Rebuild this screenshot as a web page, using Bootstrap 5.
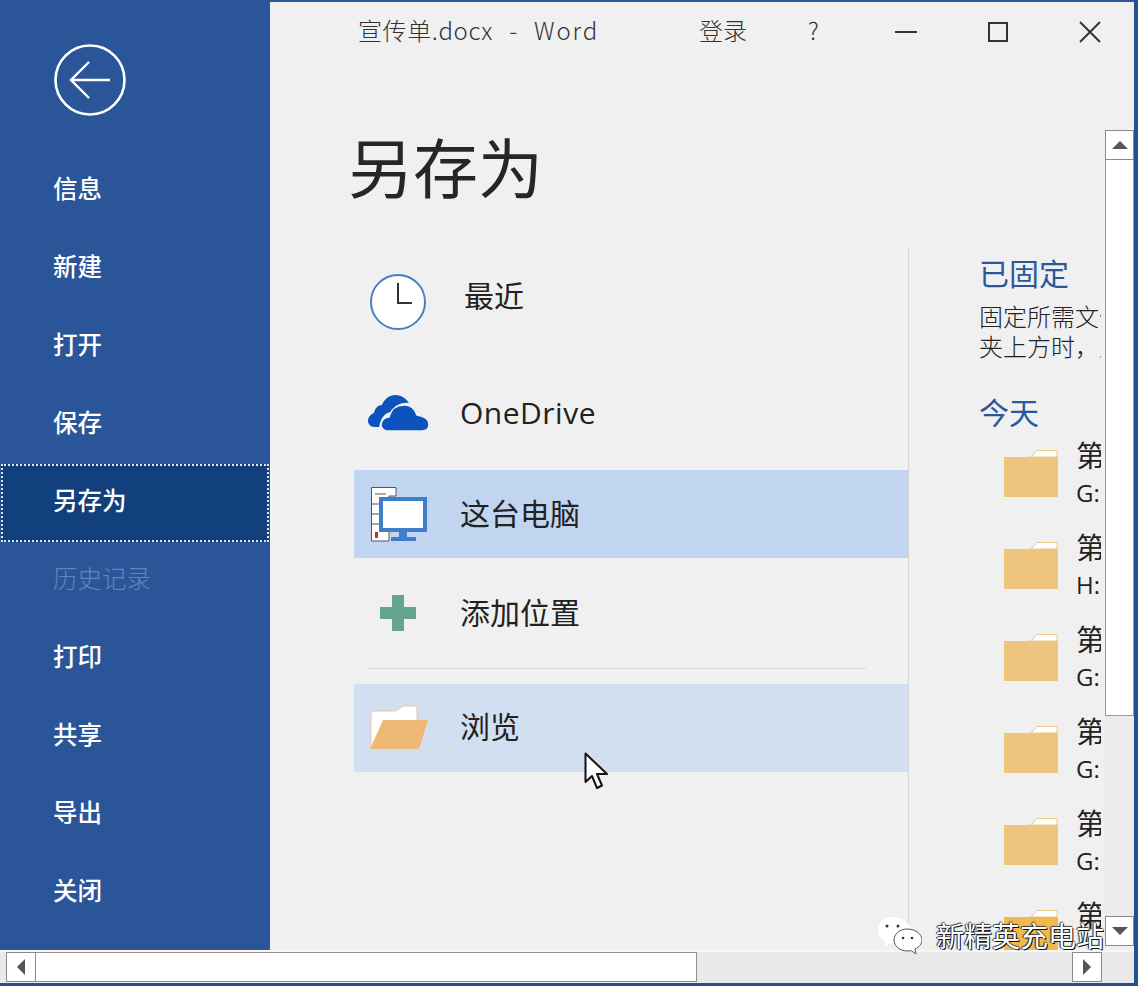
<!DOCTYPE html>
<html lang="zh-CN">
<head>
<meta charset="utf-8">
<title>另存为</title>
<link href="https://cdn.jsdelivr.net/npm/bootstrap@5.3.0/dist/css/bootstrap.min.css" rel="stylesheet">
<style>
html,body{margin:0;height:986px;overflow:hidden;background:#24518f}
body{font-family:"Noto Sans CJK SC","Liberation Sans",sans-serif;color:#262626}
svg{display:block}
.win{width:1138px;height:986px;background:#24518f;position:relative;overflow:hidden}
.win-top{height:950px}
.side{width:270px;background:#2a5699;flex:none}
.back-wrap{height:152px;padding:44px 0 0 54px}
.side-item{height:78px;padding-left:53px;color:#fff;font-size:24.5px;line-height:72px;font-weight:500}
.side-item.now{background:#11407c;outline:2px dotted #dfe6f0;outline-offset:-2px;margin:0 1px 0 1px;padding-left:52px}
.side-item.off{color:#5f86bd;font-weight:300}
.main{width:864px;background:#f0f0f1;border-top:2px solid #2b579a;flex:none}
.tbar{height:60px;font-size:24px;font-weight:300;color:#333;padding:0 0 4px 88px}
.tbar-name{width:341px;flex:none;letter-spacing:.6px;white-space:pre;word-spacing:2.2px}
.tbar-app{letter-spacing:1.9px}
.tbar-login{width:108px;flex:none}
.tbar-q{width:87px;flex:none;font-size:24px;padding-left:1px}
.tbar-btn{width:92px;flex:none;margin-top:4px}
.tbar-btn:last-child{width:24px}
.pane{height:888px}
.body-col{width:835px;overflow:hidden;flex:none}
h1.page-title{font-size:65px;font-weight:400;line-height:80px;margin:63px 0 0 78px;color:#262626;height:123px}
.cols{height:702px}
.places{width:555px;margin-left:84px;border-right:1px solid #d6d6d8;flex:none;height:702px}
.place{height:88px;font-size:30px;font-weight:400;color:#222}
.place-ico{width:106px;padding-left:16px;flex:none}
.place-txt{padding-bottom:4px}
.place.sel{background:#c1d4f0}
.place.hov{background:#d2dff1}
.p-recent{height:98px}
.p-recent .place-ico{padding-top:10px}
.p-recent .place-txt{padding-left:4px;padding-bottom:6px}
.p-drive{height:124px;padding-top:10px}
.p-drive .place-ico{padding-left:13px}
.sel .place-ico{padding-top:2px}
.p-add{height:110px}
.p-add .place-ico{padding-left:12px}
.hov .place-ico{padding-bottom:3px;padding-left:15px;width:106px}
.hov .place-txt{padding-bottom:6px}
.rule{height:1px;background:#d8d8d8;margin:0 42px 15px 13px}
.latin{font-family:"Open Sans","Noto Sans CJK SC",sans-serif;font-size:30px;letter-spacing:.5px;padding-bottom:2px}
.recent-col{padding-left:70px;width:192px;flex:none;overflow:hidden;height:702px}
.rc-title{color:#2b579a;font-size:30px;line-height:40px;margin-top:4px;white-space:nowrap}
.rc-note{font-size:24px;line-height:30px;white-space:nowrap;margin-top:9px;font-weight:300;color:#222}
.rc-today{color:#2b579a;font-size:30px;line-height:40px;margin-top:30px}
.fold-list{margin-top:3px}
.fold{height:92px;padding-left:25px}
.fold-ico{width:72px;flex:none;padding-top:15px}
.fold-t{font-size:29px;line-height:40px;color:#222}
.fold-p{font-size:24px;line-height:34px;color:#222;font-family:"Open Sans",sans-serif;margin-top:2px}
.vbar{width:29px;flex:none;margin-top:68px;height:816px;background:#ececed}
.sb-btn{background:#fff;border:1px solid #8a8a8a;display:flex;align-items:center;justify-content:center;flex:none}
.vb-up,.vb-dn{width:29px;height:30px}
.vb-thumb{height:556px;background:#fff;border:1px solid #9a9a9a;border-top:0;width:29px}
.vb-gap{height:200px}
.hbar{height:31px;background:#e9e9ea;padding-left:6px;width:1134px}
.hbar-wrap{background:#f7f7f8;height:33px;padding-top:2px;width:1134px}
.hb-l,.hb-r{width:30px;height:30px}
.hb-thumb{width:661px;height:30px;background:#fff;border:1px solid #9a8d80;border-left:0}
.hb-gap{width:375px}
.edge{width:4px;background:#24518f;flex:none}
.mark-over{position:absolute;left:878px;top:915px;display:flex;align-items:center;color:#fff;font-size:28px;line-height:40px;text-shadow:1px 1px 0 #111,-1px 0 1px #222,0 -1px 1px #444;white-space:nowrap}
.mark-name{margin-left:14px}
.pointer{position:absolute;left:584px;top:752px}
</style>
</head>
<body>
<div class="win">
  <div class="win-top d-flex">
    <nav class="side">
      <div class="back-wrap">
        <svg width="72" height="72" viewBox="0 0 72 72" fill="none" stroke="#fff" aria-label="返回"><circle cx="36" cy="36" r="34.500" stroke-width="2.600"/><path d="M17 36H56M35 18 17 36l18 18" stroke-width="2.400"/></svg>
      </div>
      <div class="side-item">信息</div>
      <div class="side-item">新建</div>
      <div class="side-item">打开</div>
      <div class="side-item">保存</div>
      <div class="side-item now">另存为</div>
      <div class="side-item off">历史记录</div>
      <div class="side-item">打印</div>
      <div class="side-item">共享</div>
      <div class="side-item">导出</div>
      <div class="side-item">关闭</div>
    </nav>
    <main class="main">
      <div class="tbar d-flex align-items-center">
        <div class="tbar-name">宣传单.docx  -  <span class="tbar-app">Word</span></div>
        <div class="tbar-login">登录</div>
        <div class="tbar-q">?</div>
        <div class="tbar-btn"><svg width="24" height="24" viewBox="0 0 24 24" stroke="#333" stroke-width="2" fill="none"><path d="M1 12H23"/></svg></div>
        <div class="tbar-btn"><svg width="24" height="24" viewBox="0 0 24 24" stroke="#333" stroke-width="2" fill="none"><rect x="3" y="3" width="18" height="18"/></svg></div>
        <div class="tbar-btn"><svg width="24" height="24" viewBox="0 0 24 24" stroke="#333" stroke-width="2" fill="none"><path d="M2 2 22 22M22 2 2 22"/></svg></div>
      </div>
      <div class="pane d-flex">
        <div class="body-col">
          <h1 class="page-title">另存为</h1>
          <div class="cols d-flex">
            <div class="places">
              <div class="place p-recent d-flex align-items-center">
                <div class="place-ico"><svg width="56" height="56" viewBox="0 0 56 56" fill="#fff" stroke="#4b7fbf"><circle cx="28" cy="28" r="27" stroke-width="2"/><path d="M28 9V29H42" fill="none" stroke="#333" stroke-width="2"/></svg></div>
                <div class="place-txt">最近</div>
              </div>
              <div class="place p-drive d-flex align-items-center">
                <div class="place-ico"><svg width="64" height="38" viewBox="0 0 64 38"><path fill="#0e52bd" d="M1 27c0-4 3-7 6-8 1-5 4-8 8-8 2-6 8-10 13-10 6 0 11 3 14 8-7-1-14 2-18 9-6 1-10 5-12 15H7c-3 0-6-3-6-6z"/><path fill="#0e52bd" stroke="#f0f0f1" stroke-width="1.500" d="M14 31c0-5 4-8 8-8 2-8 8-12 15-12 6 0 11 4 13 10 6 1 12 4 12 9 0 5-3 7-7 7H20c-3 0-6-3-6-6z"/></svg></div>
                <div class="latin">OneDrive</div>
              </div>
              <div class="place sel d-flex align-items-center">
                <div class="place-ico"><svg width="58" height="58" viewBox="0 0 58 58"><path d="M1.500 1.500H26V10H19V55H1.500z" fill="#fff" stroke="#555"/><path d="M5 8H16M2 18H12M2 28H12M2 38H12" stroke="#555" fill="none"/><rect x="5" y="46" width="3" height="6" fill="#b33"/><rect x="11" y="13" width="44" height="31" fill="#fff" stroke="#3f7fc9" stroke-width="4"/><path d="M29 44h8v7h-8zM21 51h25v4H21z" fill="#3f7fc9"/></svg></div>
                <div class="place-txt">这台电脑</div>
              </div>
              <div class="place p-add d-flex align-items-center">
                <div class="place-ico"><svg width="60" height="60" viewBox="0 0 60 60"><path fill="#65a48f" d="M26 12H38V24H50V36H38V48H26V36H14V24H26z"/></svg></div>
                <div class="place-txt">添加位置</div>
              </div>
              <div class="rule"></div>
              <div class="place hov d-flex align-items-center">
                <div class="place-ico"><svg width="60" height="44" viewBox="0 0 60 44"><path d="M2 42V9c0-2 1-3 3-3h21c4-1 6-5 10-5h9c2 0 3 1 3 3v12L18 44z" fill="#fff" stroke="#e8c9a4"/><path d="M14 15H59L51 41c-.5 2-1 3-3 3H1z" fill="#edb974"/></svg></div>
                <div class="place-txt">浏览</div>
              </div>
            </div>
            <div class="recent-col">
              <div class="rc-title">已固定</div>
              <div class="rc-note">固定所需文件夹<br>夹上方时，此处</div>
              <div class="rc-today">今天</div>
              <div class="fold-list">
                <div class="fold d-flex">
                  <div class="fold-ico"><svg width="54" height="48" viewBox="0 0 54 48"><path d="M27 8 33 1.500H53V8z" fill="#fff" stroke="#edc98c"/><rect y="8" width="54" height="40" fill="#eec57f"/></svg></div>
                  <div><div class="fold-t">第</div><div class="fold-p">G:</div></div>
                </div>
                <div class="fold d-flex">
                  <div class="fold-ico"><svg width="54" height="48" viewBox="0 0 54 48"><path d="M27 8 33 1.500H53V8z" fill="#fff" stroke="#edc98c"/><rect y="8" width="54" height="40" fill="#eec57f"/></svg></div>
                  <div><div class="fold-t">第</div><div class="fold-p">H:</div></div>
                </div>
                <div class="fold d-flex">
                  <div class="fold-ico"><svg width="54" height="48" viewBox="0 0 54 48"><path d="M27 8 33 1.500H53V8z" fill="#fff" stroke="#edc98c"/><rect y="8" width="54" height="40" fill="#eec57f"/></svg></div>
                  <div><div class="fold-t">第</div><div class="fold-p">G:</div></div>
                </div>
                <div class="fold d-flex">
                  <div class="fold-ico"><svg width="54" height="48" viewBox="0 0 54 48"><path d="M27 8 33 1.500H53V8z" fill="#fff" stroke="#edc98c"/><rect y="8" width="54" height="40" fill="#eec57f"/></svg></div>
                  <div><div class="fold-t">第</div><div class="fold-p">G:</div></div>
                </div>
                <div class="fold d-flex">
                  <div class="fold-ico"><svg width="54" height="48" viewBox="0 0 54 48"><path d="M27 8 33 1.500H53V8z" fill="#fff" stroke="#edc98c"/><rect y="8" width="54" height="40" fill="#eec57f"/></svg></div>
                  <div><div class="fold-t">第</div><div class="fold-p">G:</div></div>
                </div>
                <div class="fold d-flex">
                  <div class="fold-ico"><svg width="54" height="48" viewBox="0 0 54 48"><path d="M27 8 33 1.500H53V8z" fill="#fff" stroke="#edc98c"/><rect y="8" width="54" height="40" fill="#f2b94f"/></svg></div>
                  <div><div class="fold-t">第</div></div>
                </div>
              </div>
            </div>
          </div>
        </div>
        <div class="vbar d-flex flex-column">
          <div class="sb-btn vb-up"><svg width="16" height="10" viewBox="0 0 16 10"><path d="M8 1 16 9H0z" fill="#555"/></svg></div>
          <div class="vb-thumb"></div>
          <div class="vb-gap"></div>
          <div class="sb-btn vb-dn"><svg width="16" height="10" viewBox="0 0 16 10"><path d="M8 9 16 1H0z" fill="#555"/></svg></div>
        </div>
      </div>
    </main>
    <div class="edge"></div>
  </div>
  <div class="hbar-wrap">
    <div class="hbar d-flex">
      <div class="sb-btn hb-l"><svg width="10" height="16" viewBox="0 0 10 16"><path d="M1 8 9 0V16z" fill="#555"/></svg></div>
      <div class="hb-thumb"></div>
      <div class="hb-gap"></div>
      <div class="sb-btn hb-r"><svg width="10" height="16" viewBox="0 0 10 16"><path d="M9 8 1 0V16z" fill="#555"/></svg></div>
    </div>
  </div>
  <svg class="pointer" width="26" height="40" viewBox="0 0 26 40"><path d="M1.500 1.500V30L8 24 13 36 18 33.500 13 22H23z" fill="#fff" stroke="#111" stroke-width="2" stroke-linejoin="round"/></svg>
  <div class="mark-over">
    <svg width="44" height="38" viewBox="0 0 44 38"><path d="M14 1C6 1 0 6 0 14c0 5 3 9 7 11l-1 6 6-4c2 .5 4 .5 6 0 0-8 7-14 15-13C32 6 24 1 14 1z" fill="#fff"/><path d="M29 13c-7 0-13 5-13 11s6 11 13 11c1.500 0 3 0 4-.5l5 3.500-1-5c4-2 7-5 7-9 0-6-7-11-15-11z" fill="#fff" stroke="#555"/><circle cx="9" cy="10" r="1.500" fill="#333"/><circle cx="20" cy="10" r="1.500" fill="#333"/><circle cx="25" cy="22" r="1.300" fill="#333"/><circle cx="34" cy="22" r="1.300" fill="#333"/></svg>
    <span class="mark-name">新精英充电站</span>
  </div>
</div>
<script src="https://cdn.jsdelivr.net/npm/bootstrap@5.3.0/dist/js/bootstrap.bundle.min.js"></script>
</body>
</html>
